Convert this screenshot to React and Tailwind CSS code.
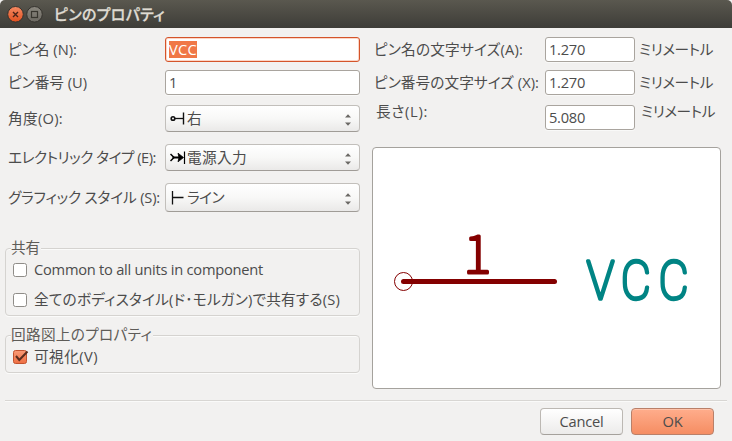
import { useLayoutEffect, useRef, useState } from "react";

// Single line of text whose tracking is adjusted so that it spans `w` pixels.
function T({ w, children, className = "" }) {
  const ref = useRef(null);
  const [spacing, setSpacing] = useState(0);
  useLayoutEffect(() => {
    const natural = ref.current.getBoundingClientRect().width;
    setSpacing((w - natural) / Array.from(ref.current.textContent).length);
  }, [w]);
  return (
    <span className={`block shrink-0 ${className}`} style={{ width: w }}>
      <span ref={ref} className="whitespace-nowrap [font-feature-settings:'palt']" style={{ letterSpacing: spacing }}>
        {children}
      </span>
    </span>
  );
}

function Entry({ children, className = "", focused = false }) {
  return (
    <div
      className={`flex h-[25px] shrink-0 items-center rounded-[3px] border bg-white pb-[2px] pl-[3px] ${
        focused ? "border-[#d4542a] shadow-[inset_0_0_0_1px_#fbd5c6]" : "border-[#a9a49e] shadow-[0_1px_0_#f9f9f8]"
      } ${className}`}
    >
      {children}
    </div>
  );
}

function Select({ icon, children, className = "" }) {
  return (
    <div
      className={`flex w-[195px] shrink-0 items-center rounded-[4px] border border-[#c2bfbb] border-b-[#a09c97] bg-linear-to-b from-white via-[#f8f8f7] to-[#eae9e8] pl-1 pr-[7px] ${className}`}
    >
      {icon}
      <div className="ml-px grow">{children}</div>
      <svg width="8" height="14" viewBox="0 0 8 14" className="mt-[3px]">
        <path d="M1 4.4 L4 1.2 L7 4.4 Z M1 9.6 L4 12.8 L7 9.6 Z" fill="#6b6965" />
      </svg>
    </div>
  );
}

function Row({ className, label, children }) {
  return (
    <div className={`flex items-center justify-between ${className}`}>
      {label}
      {children}
    </div>
  );
}

function Group({ title, titleWidth, className = "", children }) {
  return (
    <fieldset className={`relative rounded-[4px] border border-[#d5d3d0] shadow-[0_1px_0_#fbfbfa,inset_0_1px_0_#fbfbfa] ${className}`}>
      <div className="absolute -top-[12px] left-[5px] bg-[#f2f1f0] pr-px leading-[20px] text-[#5e5c58]">
        <T w={titleWidth}>{title}</T>
      </div>
      {children}
    </fieldset>
  );
}

function Check({ checked = false }) {
  return (
    <svg width="17" height="16" viewBox="0 0 17 16" className="shrink-0">
      <defs>
        <linearGradient id="checkFill" x1="0" y1="0" x2="0" y2="1">
          <stop offset="0" stopColor="#f99a75" />
          <stop offset="1" stopColor="#ee6f43" />
        </linearGradient>
      </defs>
      <rect
        x="1.5"
        y="1.5"
        width="13"
        height="13"
        rx="2"
        fill={checked ? "url(#checkFill)" : "#fff"}
        stroke={checked ? "#c2522e" : "#8f8c88"}
      />
      {checked && <path d="M4 7 L7.3 11 L15.5 2.5" fill="none" stroke="#5a2c1d" strokeWidth="2" />}
    </svg>
  );
}

const orientationIcon = (
  <svg width="16" height="16" viewBox="0 0 16 16" fill="none" stroke="#111">
    <circle cx="3" cy="7.5" r="1.8" strokeWidth="1.6" />
    <path d="M5 7.5 H13" strokeWidth="1.3" />
    <path d="M13.5 1.5 V13.5" strokeWidth="1.4" />
  </svg>
);

const powerInputIcon = (
  <svg width="16" height="16" viewBox="0 0 16 16" fill="none" stroke="#000">
    <path d="M0.5 4 L4 7.5 L0.5 11" strokeWidth="1.5" />
    <path d="M2.5 7.5 H9" strokeWidth="2" />
    <path d="M8 3.2 L13.5 7.5 L8 11.8 L9 7.5 Z" fill="#000" strokeWidth="0.8" />
    <path d="M14.5 1.5 V14" strokeWidth="1.2" />
  </svg>
);

const lineIcon = (
  <svg width="16" height="16" viewBox="0 0 16 16" fill="none" stroke="#111" strokeWidth="1.3">
    <path d="M2.5 1 V14.5 M2.5 7.5 H13.5" />
  </svg>
);

export default function App() {
  return (
    <div className="flex h-[441px] w-[732px] flex-col overflow-hidden bg-[#f2f1f0] font-['Open_Sans','Noto_Sans_CJK_JP',sans-serif] text-[14.67px] leading-[20px] text-[#4c4c4c]">
      <header className="flex h-[28px] shrink-0 items-center rounded-t-[5px] bg-linear-to-b from-[#5a584f] to-[#3e3d38] pl-[7px]">
        <svg width="36" height="18" viewBox="0 0 36 18">
          <defs>
            <linearGradient id="closeFill" x1="0" y1="0" x2="0" y2="1">
              <stop offset="0" stopColor="#f58a63" />
              <stop offset="1" stopColor="#e2501f" />
            </linearGradient>
            <linearGradient id="maxFill" x1="0" y1="0" x2="0" y2="1">
              <stop offset="0" stopColor="#8b887f" />
              <stop offset="1" stopColor="#6b6861" />
            </linearGradient>
          </defs>
          <circle cx="8.5" cy="9.3" r="7.8" fill="url(#closeFill)" stroke="#35332e" />
          <path d="M6 7 L11 12 M11 7 L6 12" stroke="#4a2318" strokeWidth="1.4" />
          <circle cx="27.5" cy="9.3" r="7.8" fill="url(#maxFill)" stroke="#35332e" />
          <rect x="24.5" y="6.5" width="6" height="6" fill="none" stroke="#38362f" strokeWidth="1.2" />
        </svg>
        <T w={111} className="-mt-px ml-[11px] text-[15px] font-medium text-[#dfdbd2] [-webkit-text-stroke:0.3px_#dfdbd2]">ピンのプロパティ</T>
      </header>

      <main className="flex h-[372px] shrink-0">
        <section className="ml-[5px] w-[355px] pt-[9px]">
          <div className="pl-[3px]">
            <Row className="h-[25px]" label={<T w={69} className="-mt-[2px]">ピン名 (N):</T>}>
              <Entry focused className="w-[195px]">
                <span className="mt-[2px] bg-[#f07746] leading-[17px] text-white"><T w={28}>VCC</T></span>
              </Entry>
            </Row>
            <Row className="mt-[8px] h-[25px]" label={<T w={79} className="-mt-[2px]">ピン番号 (U)</T>}>
              <Entry className="w-[195px]"><span>1</span></Entry>
            </Row>
            <Row className="mt-[10px] h-[27px]" label={<T w={55} className="-mt-[2px]">角度(O):</T>}>
              <Select className="h-[27px]" icon={orientationIcon}><T w={15} className="-mt-[2px]">右</T></Select>
            </Row>
            <Row className="mt-[12px] h-[27px]" label={<T w={148} className="-mt-[2px]">エレクトリック タイプ (E):</T>}>
              <Select className="h-[27px]" icon={powerInputIcon}><T w={60} className="-mt-[2px]">電源入力</T></Select>
            </Row>
            <Row className="mt-[12px] h-[29px]" label={<T w={152} className="-mt-px">グラフィック スタイル (S):</T>}>
              <Select className="h-[29px]" icon={lineIcon}><T w={37} className="-mt-px">ライン</T></Select>
            </Row>
          </div>

          <Group title="共有" titleWidth={29} className="mt-[36px] h-[68px] pt-[11px] pl-[6px]">
            <div className="flex h-[20px] items-center gap-[5px]">
              <Check /><T w={229} className="-mt-[3px]">Common to all units in component</T>
            </div>
            <div className="mt-[10px] flex h-[20px] items-center gap-[5px]">
              <Check /><T w={306} className="-mt-[3px]">全てのボディスタイル(ド･モルガン)で共有する(S)</T>
            </div>
          </Group>
          <Group title="回路図上のプロパティ" titleWidth={141} className="mt-[19px] h-[38px] pt-[11px] pl-[6px]">
            <div className="flex h-[20px] items-center gap-[5px]">
              <Check checked /><T w={64} className="-mt-[3px]">可視化(V)</T>
            </div>
          </Group>
        </section>

        <section className="ml-[12px] w-[349px] pt-[9px]">
          <div className="flex h-[25px] items-center">
            <div className="-mt-[2px] w-[173px] pl-[2px]"><T w={149}>ピン名の文字サイズ(A):</T></div>
            <Entry className="w-[90px]"><T w={36}>1.270</T></Entry>
            <T w={74} className="-mt-[2px] ml-[4px]">ミリメートル</T>
          </div>
          <div className="mt-[8px] flex h-[25px] items-center">
            <div className="-mt-[2px] w-[173px] pl-[2px]"><T w={165}>ピン番号の文字サイズ (X):</T></div>
            <Entry className="w-[90px]"><T w={36}>1.270</T></Entry>
            <T w={74} className="-mt-[2px] ml-[4px]">ミリメートル</T>
          </div>
          <div className="mt-[10px] flex h-[25px]">
            <div className="w-[173px] pl-[4px]"><T w={52} className="-mt-[4px]">長さ(L):</T></div>
            <Entry className="w-[90px]"><T w={36}>5.080</T></Entry>
            <T w={74} className="-mt-[4px] ml-[6px]">ミリメートル</T>
          </div>

          <div className="mt-[17px] h-[242px] overflow-hidden rounded-[4px] border border-[#a5a29d] bg-white">
            <svg width="347" height="240" viewBox="373 148 347 240">
              <circle cx="403.5" cy="281.5" r="9" fill="none" stroke="#840000" />
              <path d="M403.5 281.5 H554.5" stroke="#840000" strokeWidth="5" strokeLinecap="round" />
              <g strokeLinejoin="round" strokeLinecap="round">
                <text transform="translate(463.5 273)" fontFamily="Noto Sans CJK JP" fontWeight="100" fontSize="53" fill="#840000" stroke="#840000" strokeWidth="3">1</text>
                <text transform="translate(586.8 298.5) scale(0.85 1)" x="0 40.2 84.8" fontFamily="Roboto" fontWeight="100" fontSize="54" fill="#008484" stroke="#008484" strokeWidth="3.6">VCC</text>
              </g>
            </svg>
          </div>
        </section>
      </main>

      <footer className="mx-[5px] flex h-[41px] items-start justify-end gap-[8px] border-t border-[#d8d6d3] pt-[7px] pr-[13px] shadow-[inset_0_1px_0_#fafaf9]">
        <button className="flex h-[27px] w-[83px] items-center justify-center rounded-[4px] border border-[#bcb8b3] border-b-[#a5a19c] bg-linear-to-b from-white to-[#ecebea] pb-px">
          <T w={44}>Cancel</T>
        </button>
        <button className="flex h-[27px] w-[83px] items-center justify-center rounded-[4px] border border-[#b98069] bg-linear-to-b from-[#ffad8c] to-[#f58d62] pb-px shadow-[inset_0_1px_0_#ffc3aa]">
          <T w={20}>OK</T>
        </button>
      </footer>
    </div>
  );
}
